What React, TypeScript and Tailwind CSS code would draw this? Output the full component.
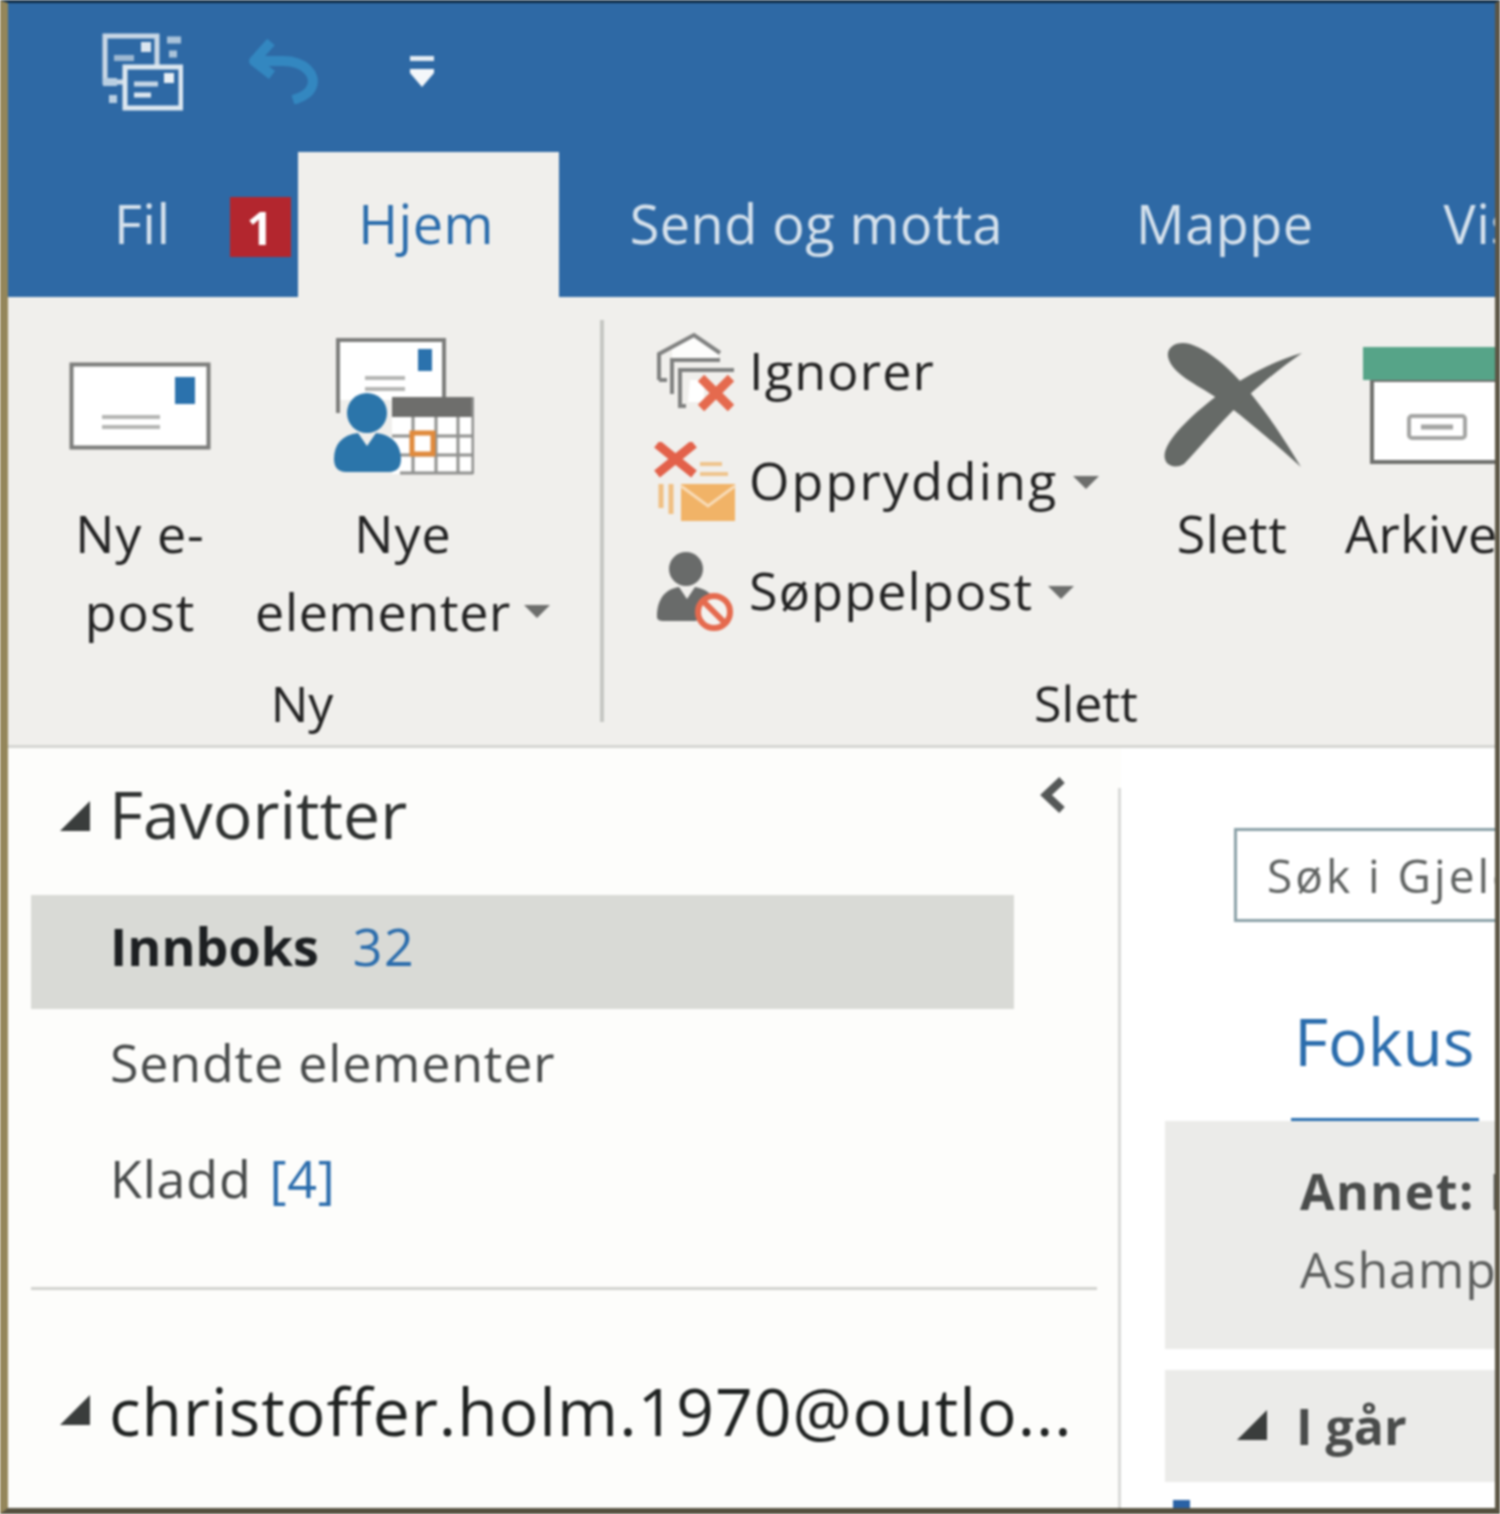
import type { ReactNode } from 'react'

/* Outlook 2016-ribbon, forstørret utsnitt */

const font = { fontFamily: '"Open Sans", "Noto Sans", sans-serif' }

function Caret() {
  return (
    <svg width="28" height="16" viewBox="0 0 28 16" className="shrink-0">
      <path d="M1 2h26L14 15z" fill="#6d6e6c" />
    </svg>
  )
}

function Triangle({ className }: { className?: string }) {
  return (
    <svg width="32" height="32" viewBox="0 0 32 32" className={className}>
      <path d="M31 1v30H1z" fill="#3a3d3c" />
    </svg>
  )
}

function SendReceiveIcon() {
  return (
    <svg width="82" height="80" viewBox="0 0 82 80" fill="none">
      <path d="M56 35V5H4v46h18" stroke="#c9d8e6" strokeWidth="5" />
      <rect x="40" y="11" width="10" height="10" fill="#dbe6f0" />
      <path d="M13 27h20" stroke="#9db8d2" strokeWidth="6" />
      <path d="M66 9h14M68 23h8" stroke="#a9c3da" strokeWidth="7" />
      <rect x="24" y="36" width="56" height="41" stroke="#dce7f0" strokeWidth="5" />
      <rect x="63" y="42" width="10" height="10" fill="#e8eff5" />
      <path d="M33 53h24" stroke="#c6d7e6" strokeWidth="5" />
      <path d="M33 64h17" stroke="#dce7f0" strokeWidth="5" />
      <path d="M2 51h14M8 68h8" stroke="#b9cfe2" strokeWidth="8" />
    </svg>
  )
}

function UndoIcon() {
  return (
    <svg width="72" height="66" viewBox="0 0 72 66" fill="none">
      <path
        d="M23 4 6 23l18 14M8 23h27c22 0 33 14 29 25-2 7-9 11-19 14"
        stroke="#3387c0"
        strokeWidth="10"
        strokeLinejoin="round"
      />
    </svg>
  )
}

function CustomizeIcon() {
  return (
    <svg width="28" height="34" viewBox="0 0 28 34">
      <rect x="2" y="2" width="24" height="5" fill="#e4ecf3" />
      <rect x="2" y="15" width="24" height="4" fill="#f4f7fa" />
      <path d="M2 19h24L14 33z" fill="#f4f7fa" />
    </svg>
  )
}

function MailIcon() {
  return (
    <svg width="142" height="88" viewBox="0 0 142 88">
      <rect x="2.5" y="2.5" width="137" height="83" fill="#fff" stroke="#7c7d7b" strokeWidth="4" />
      <rect x="106" y="15" width="20" height="27" fill="#2b72ad" />
      <path d="M33 55h58M33 65h58" stroke="#b5b6b4" strokeWidth="4" />
    </svg>
  )
}

function NewItemsIcon() {
  return (
    <svg width="142" height="140" viewBox="0 0 142 140" fill="none">
      <path d="M6 70V3h106v60H6z" fill="#fff" />
      <path d="M6 76V3h106v62" stroke="#7c7d7b" strokeWidth="4" />
      <rect x="86" y="12" width="14" height="22" fill="#2b72ad" />
      <path d="M33 41h40M33 52h40" stroke="#b5b6b4" strokeWidth="4" />
      <rect x="60" y="60" width="81" height="77" fill="#fff" />
      <rect x="60" y="60" width="81" height="20" fill="#6e6e6c" />
      <path
        d="M81 80v57M104 80v57M126 80v57M60 99h81M60 118h81M141 60v77M68 136h73"
        stroke="#8f908e"
        strokeWidth="3"
      />
      <rect x="80" y="96" width="21" height="21" fill="#fff" stroke="#e08a3c" strokeWidth="5" />
      <circle cx="35" cy="76" r="20" fill="#2b75aa" />
      <path
        d="M2 122c0-15 8-24 24-26l9 13 9-13c16 2 25 11 25 26 0 8-4 13-12 13H14c-8 0-12-5-12-13z"
        fill="#2b75aa"
      />
    </svg>
  )
}

function IgnoreIcon() {
  return (
    <svg width="82" height="80" viewBox="0 0 82 80" fill="none">
      <path d="M18 16 42 2l22 16v8H18z" fill="#fdfdfc" />
      <path d="M5 48V22L40 3l26 18M5 48h8" stroke="#808180" strokeWidth="4" />
      <path d="M18 62V28h48M32 74h-6V38h54" stroke="#808180" strokeWidth="4" />
      <path d="M36 48h14v22H34z" fill="#fff" />
      <path d="M47 46 77 76M77 46 47 76" stroke="#e56a4e" strokeWidth="9" />
    </svg>
  )
}

function CleanupIcon() {
  return (
    <svg width="82" height="80" viewBox="0 0 82 80" fill="none">
      <path d="M3 2 40 32M40 2 3 32" stroke="#e3614a" strokeWidth="9" />
      <path d="M46 22h22M46 32h28" stroke="#efc48d" strokeWidth="4" />
      <path d="M7 42v24M17 42v30" stroke="#f0bf82" strokeWidth="5" />
      <rect x="27" y="42" width="54" height="37" fill="#f1b367" />
      <path d="M27 44 54 64 81 44" stroke="#f8dcb8" strokeWidth="3" />
    </svg>
  )
}

function JunkIcon() {
  return (
    <svg width="82" height="82" viewBox="0 0 82 82" fill="none">
      <circle cx="32" cy="18" r="17" fill="#696b6a" />
      <path d="M3 66c0-18 8-28 22-30l8 12 8-12c12 2 18 8 20 16L42 70H10c-4 0-7-1-7-4z" fill="#696b6a" />
      <circle cx="60" cy="61" r="16" fill="#f3f2ef" stroke="#e56a4e" strokeWidth="6" />
      <path d="M49 50 71 72" stroke="#e56a4e" strokeWidth="6" />
    </svg>
  )
}

function DeleteIcon() {
  return (
    <svg width="144" height="132" viewBox="0 0 144 132">
      <path
        d="M9 20C4 8 16 0 30 4c30 10 65 46 111 123-36-32-66-57-81-67C40 46 15 36 9 20z"
        fill="#666a67"
      />
      <path
        d="M142 13c-32 9-62 27-80 39C35 72 10 95 5 112c-3 13 9 18 19 12 12-12 36-42 62-66 19-18 39-33 56-45z"
        fill="#666a67"
      />
    </svg>
  )
}

function ArchiveIcon() {
  return (
    <svg width="150" height="118" viewBox="0 0 150 118" fill="none" className="shrink-0">
      <rect x="9" y="33" width="160" height="82" fill="#fff" stroke="#6f706d" strokeWidth="4" />
      <rect x="0" y="0" width="150" height="33" fill="#56a488" />
      <rect x="46" y="69" width="56" height="22" rx="3" stroke="#a4a5a3" strokeWidth="4" />
      <path d="M58 80h32" stroke="#a4a5a3" strokeWidth="5" />
    </svg>
  )
}

function SmallAction({ icon, label, caret }: { icon: ReactNode; label: ReactNode; caret?: boolean }) {
  return (
    <div className="flex h-[110px] items-center whitespace-nowrap">
      <div className="w-[95px] shrink-0">{icon}</div>
      <span className="pb-[4px] text-[52px] leading-none tracking-[1.2px] text-[#222222]">{label}</span>
      {caret && (
        <span className="ml-[14px]">
          <Caret />
        </span>
      )}
    </div>
  )
}

function FolderRow({ children, selected }: { children: ReactNode; selected?: boolean }) {
  return (
    <div
      className={`mb-[2px] flex h-[114px] items-center whitespace-nowrap pb-[12px] pl-[79px] text-[52px] ${
        selected ? 'bg-[#d9dad6]' : ''
      }`}
    >
      {children}
    </div>
  )
}

export default function App() {
  return (
    <div
      style={font}
      className="h-[1514px] w-[1500px] overflow-hidden border-t-[3px] border-r-[5px] border-b-[6px] border-l-[8px] border-t-[#0d2a44] border-r-[#5c5645] border-b-[#55503f] border-l-[#94865a] bg-[#fdfdfb] blur-[0.8px]"
    >
      <div className="flex h-[149px] items-center bg-[#2e69a5] pb-[13px]">
        <div className="ml-[93px]">
          <SendReceiveIcon />
        </div>
        <div className="ml-[65px]">
          <UndoIcon />
        </div>
        <div className="ml-[88px]">
          <CustomizeIcon />
        </div>
      </div>

      <div className="flex h-[145px] items-stretch overflow-hidden whitespace-nowrap bg-[#2e69a5] text-[54px] tracking-[0.5px] text-[#d5e1ec]">
        <span className="ml-[106px] shrink-0 self-center pb-[3px]">Fil</span>
        <span className="mt-[45px] ml-[59px] flex h-[60px] w-[61px] shrink-0 items-center justify-center self-start bg-[#b3262e] text-[46px] font-bold text-white">
          1
        </span>
        <div className="ml-[7px] flex w-[261px] shrink-0 items-center justify-center bg-[#f0efec] pr-[4px] pb-[3px] text-[#2a6cac]">
          Hjem
        </div>
        <span className="ml-[71px] shrink-0 self-center pb-[3px]">Send og motta</span>
        <span className="ml-[133px] shrink-0 self-center pb-[3px]">Mappe</span>
        <span className="ml-[130px] shrink-0 self-center pb-[3px]">Vis</span>
      </div>

      <div className="flex h-[451px] overflow-hidden border-b-[3px] border-[#d5d6d2] bg-[#f0efec] text-[#222222]">
        <div className="flex w-[592px] shrink-0 flex-col">
          <div className="flex h-[367px] shrink-0">
            <div className="ml-[17px] flex w-[230px] flex-col items-center">
              <div className="h-[197px] shrink-0 pt-[65px]">
                <MailIcon />
              </div>
              <div className="text-center text-[52px] leading-[78px] tracking-[1px]">
                Ny e-
                <br />
                post
              </div>
            </div>
            <div className="flex w-[296px] flex-col items-center">
              <div className="h-[197px] shrink-0 pt-[40px]">
                <NewItemsIcon />
              </div>
              <div className="text-[52px] leading-[78px] tracking-[1px]">Nye</div>
              <div className="flex items-center gap-[12px] whitespace-nowrap text-[52px] leading-[78px] tracking-[0.7px]">
                elementer
                <Caret />
              </div>
            </div>
          </div>
          <div className="h-[78px] pr-[4px] text-center text-[50px] leading-[78px]">Ny</div>
        </div>

        <div className="mt-[23px] h-[402px] w-[4px] shrink-0 bg-[#c5c7c3]" />

        <div className="flex w-[964px] shrink-0 flex-col">
          <div className="flex h-[367px] shrink-0">
            <div className="w-[556px] shrink-0 pt-[20px] pl-[50px]">
              <SmallAction icon={<IgnoreIcon />} label="Ignorer" />
              <SmallAction
                icon={<CleanupIcon />}
                label={<span className="tracking-[2.1px]">Opprydding</span>}
                caret
              />
              <SmallAction icon={<JunkIcon />} label="Søppelpost" caret />
            </div>
            <div className="flex w-[144px] shrink-0 flex-col items-center">
              <div className="h-[197px] shrink-0 pt-[43px]">
                <DeleteIcon />
              </div>
              <div className="text-[52px] leading-[78px] tracking-[0.5px]">Slett</div>
            </div>
            <div className="ml-[41px] flex flex-col">
              <div className="h-[197px] shrink-0 pt-[50px] pl-[18px]">
                <ArchiveIcon />
              </div>
              <div className="text-[52px] leading-[78px] tracking-[0.5px]">Arkiver</div>
            </div>
          </div>
          <div className="h-[78px] w-[964px] text-center text-[50px] leading-[78px]">Slett</div>
        </div>
      </div>

      <div className="flex h-[760px] overflow-hidden">
        <div className="w-[1110px] shrink-0 pl-[23px]">
          <div className="flex h-[147px] pt-[26px]">
            <div className="flex w-[985px] items-start">
              <Triangle className="mt-[26px] ml-[28px]" />
              <span className="ml-[18px] text-[66px] leading-[78px] text-[#2f3231]">Favoritter</span>
            </div>
            <svg width="28" height="36" viewBox="0 0 28 36" fill="none" className="mt-[3px] ml-[22px]">
              <path d="M24 3 8 18l16 15" stroke="#555857" strokeWidth="8" />
            </svg>
          </div>

          <div className="w-[983px]">
            <FolderRow selected>
              <span className="font-bold text-[#1d2022]">Innboks</span>
              <span className="ml-[34px] tracking-[1.5px] text-[#2a6cac]">32</span>
            </FolderRow>
            <FolderRow>
              <span className="tracking-[0.8px] text-[#474a4a]">Sendte elementer</span>
            </FolderRow>
            <FolderRow>
              <span className="tracking-[0.8px] text-[#474a4a]">Kladd</span>
              <span className="ml-[18px] tracking-[0.8px] text-[#2a6cac]">[4]</span>
            </FolderRow>
          </div>

          <div className="mt-[46px] h-[3px] w-[1066px] bg-[#d2d3cf]" />

          <div className="flex h-[200px] items-center whitespace-nowrap pt-[39px]">
            <Triangle className="ml-[28px]" />
            <span className="ml-[18px] text-[66px] leading-[78px] tracking-[1px] text-[#1f2221]">
              christoffer.holm.1970@outlo...
            </span>
          </div>
        </div>

        <div className="mt-[40px] h-full w-[3px] shrink-0 bg-[#d9dad8]" />

        <div className="min-w-0 flex-1 overflow-hidden bg-white">
          <div className="ml-[113px] mt-[80px] flex h-[94px] w-[400px] items-center border-[3px] border-[#8ba1a8] pl-[30px]">
            <span className="whitespace-nowrap text-[46px] leading-none tracking-[3px] text-[#5f6261]">
              Søk i Gjeldende postboks
            </span>
          </div>
          <div className="ml-[170px] mt-[76px] w-[188px] border-b-[3px] border-[#2a6fb0] px-[3px] pb-[36px] text-[66px] leading-[84px] text-[#2a6cac]">
            Fokus
          </div>
          <div className="ml-[44px] h-[228px] w-[500px] bg-[#ebebe9] pt-[31px] pl-[135px] whitespace-nowrap text-[50px] leading-[78px]">
            <div className="font-bold tracking-[1.5px] text-[#4a4c4b]">Annet: Ny</div>
            <div className="tracking-[1px] text-[#5c5e5d]">Ashampoo</div>
          </div>
          <div className="ml-[44px] mt-[21px] flex h-[112px] w-[500px] items-center bg-[#ebebe9] pl-[71px]">
            <Triangle className="mt-[-2px]" />
            <span className="ml-[28px] text-[50px] font-bold text-[#4a4c4b]">I går</span>
          </div>
          <div className="ml-[52px] mt-[18px] h-[10px] w-[17px] bg-[#2a62a5]" />
        </div>
      </div>
    </div>
  )
}
